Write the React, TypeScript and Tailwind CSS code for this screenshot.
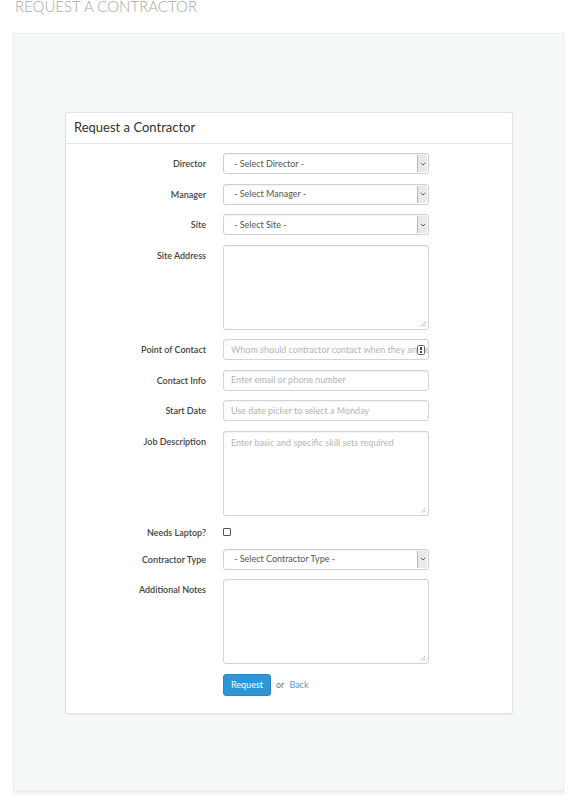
import React from 'react'

const font = { fontFamily: 'Lato, "Open Sans", sans-serif' }

function Chevron() {
  return (
    <div className="absolute right-[1px] top-[1px] bottom-[1px] w-[10px] flex items-center justify-center bg-[#e9e9e9] border-l border-[#b8b8b8] rounded-r-[2px]">
      <svg width="6" height="4" viewBox="0 0 6 4" fill="none">
        <path d="M0.8 0.8 L3 3 L5.2 0.8" stroke="#555" strokeWidth="0.9" />
      </svg>
    </div>
  )
}

function Select({ text }: { text: string }) {
  return (
    <div className="relative w-[206px] h-[21px] border border-[#cfcfcf] rounded-[3px] bg-white shadow-[inset_0_1px_1px_rgba(0,0,0,0.05)] flex items-center pl-[10px] text-[9px] text-[#555]">
      {text}
      <Chevron />
    </div>
  )
}

function Input({ placeholder, icon }: { placeholder: string; icon?: boolean }) {
  return (
    <div className="relative w-[206px] h-[21px] border border-[#d4d4d4] rounded-[3px] bg-white shadow-[inset_0_1px_1px_rgba(0,0,0,0.05)] flex items-center pl-[7px] pr-[14px] text-[9px] text-[#b5b5b5] overflow-hidden whitespace-nowrap">
      {placeholder}
      {icon && (
        <div className="absolute right-[3px] top-[5px] w-[8px] h-[10px] border border-[#666] rounded-[1.5px] flex flex-col items-center justify-center gap-[1px] bg-white">
          <div className="w-[1.5px] h-[3px] bg-[#444]" />
          <div className="w-[1.5px] h-[1.5px] bg-[#444]" />
        </div>
      )}
    </div>
  )
}

function Grip() {
  return (
    <svg className="absolute right-[2px] bottom-[2px]" width="6" height="6" viewBox="0 0 6 6">
      <path d="M5.5 1 L1 5.5 M5.5 3.5 L3.5 5.5" stroke="#999" strokeWidth="0.7" />
    </svg>
  )
}

function Textarea({ placeholder }: { placeholder?: string }) {
  return (
    <div className="relative w-[206px] h-[85px] border border-[#d4d4d4] rounded-[3px] bg-white shadow-[inset_0_1px_1px_rgba(0,0,0,0.05)] px-[7px] pt-[4px] text-[9px] text-[#b5b5b5]">
      {placeholder}
      <Grip />
    </div>
  )
}

function Row({ label, children }: { label: string; children: React.ReactNode }) {
  return (
    <div className="flex">
      <div className="w-[140px] text-right pt-[5px] text-[9px] leading-[11px] font-semibold text-[#444]">{label}</div>
      <div className="ml-[17px]">{children}</div>
    </div>
  )
}

export default function App() {
  return (
    <div className="min-h-[812px] bg-white px-[13px]" style={font}>
      <h1 className="-mt-[2px] ml-[2px] text-[15px] leading-[16px] font-light text-[#a8a8a8]">
        REQUEST A CONTRACTOR
      </h1>

      <div className="mt-[19px] w-[551px] bg-[#f5f8f9] border border-[#e9eef0] shadow-[0_3px_3px_rgba(0,0,0,0.08)] pt-[78px] pb-[76px] pl-[51px] pr-[50px]">
        <div className="bg-white border border-[#e2e2e2] rounded-[2px] shadow-[0_1px_2px_rgba(0,0,0,0.05)]">
          <div className="h-[31px] border-b border-[#e6e6e6] flex items-center pl-[8px] text-[13px] text-[#333]">
            Request a Contractor
          </div>

          <div className="pt-[9px] pb-[17px] flex flex-col gap-[9.5px]">
            <Row label="Director"><Select text="- Select Director -" /></Row>
            <Row label="Manager"><Select text="- Select Manager -" /></Row>
            <Row label="Site"><Select text="- Select Site -" /></Row>
            <Row label="Site Address"><Textarea /></Row>
            <Row label="Point of Contact">
              <Input placeholder="Whom should contractor contact when they arrive?" icon />
            </Row>
            <Row label="Contact Info"><Input placeholder="Enter email or phone number" /></Row>
            <Row label="Start Date"><Input placeholder="Use date picker to select a Monday" /></Row>
            <Row label="Job Description">
              <Textarea placeholder="Enter basic and specific skill sets required" />
            </Row>
            <div className="flex h-[14px] items-center">
              <div className="w-[140px] text-right text-[9px] leading-[11px] font-semibold text-[#444]">Needs Laptop?</div>
              <div className="ml-[17px] w-[8px] h-[8px] border border-[#555] rounded-[1px] bg-white" />
            </div>
            <Row label="Contractor Type"><Select text="- Select Contractor Type -" /></Row>
            <Row label="Additional Notes"><Textarea /></Row>
            <div className="flex items-center pl-[157px]">
              <button className="w-[48px] h-[22px] rounded-[3px] bg-[#2f96d6] border border-[#2a87c0] text-white text-[9px]">
                Request
              </button>
              <span className="ml-[5px] text-[9px] text-[#777]">or</span>
              <span className="ml-[5px] text-[9px] text-[#4a9bd3]">Back</span>
            </div>
          </div>
        </div>
      </div>
    </div>
  )
}
